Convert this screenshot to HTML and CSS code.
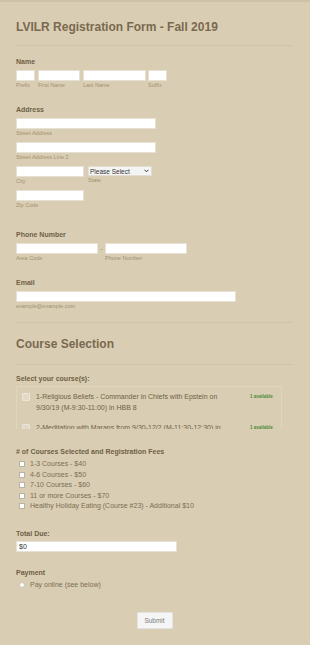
FILE: index.html
```html
<!DOCTYPE html>
<html lang="en">
  <head>
    <meta charset="UTF-8" />
    <meta name="viewport" content="width=device-width, initial-scale=1.0" />
    <title>LVILR Registration Form - Fall 2019</title>
    <link rel="stylesheet" href="styles.css">
  </head>
  <body>
    <div class="form">
      <div class="form-header">
        <h1>LVILR Registration Form - Fall 2019</h1>
      </div>

      <!-- Name -->
      <div class="field field-name">
        <div class="label">Name</div>
        <div class="row">
          <div class="part">
            <input class="input w-prefix" type="text" />
            <span class="sublabel">Prefix</span>
          </div>
          <div class="part">
            <input class="input w-first" type="text" />
            <span class="sublabel">First Name</span>
          </div>
          <div class="part">
            <input class="input w-last" type="text" />
            <span class="sublabel">Last Name</span>
          </div>
          <div class="part part-suffix">
            <input class="input w-prefix" type="text" />
            <span class="sublabel">Suffix</span>
          </div>
        </div>
      </div>

      <!-- Address -->
      <div class="field field-address">
        <div class="label">Address</div>
        <div class="part">
          <input class="input w-street" type="text" />
          <span class="sublabel">Street Address</span>
        </div>
        <div class="part part-gap">
          <input class="input w-street" type="text" />
          <span class="sublabel">Street Address Line 2</span>
        </div>
        <div class="row row-city part-gap">
          <div class="part">
            <input class="input w-city" type="text" />
            <span class="sublabel">City</span>
          </div>
          <div class="part">
            <div class="select-wrap">
              <select class="select">
                <option>Please Select</option>
              </select>
              <svg class="select-arrow" width="5" height="4" viewBox="0 0 10 8">
                <path d="M1 1.5 L5 5.5 L9 1.5" fill="none" stroke="#333" stroke-width="2" />
              </svg>
            </div>
            <span class="sublabel">State</span>
          </div>
        </div>
        <div class="part part-gap">
          <input class="input w-city" type="text" />
          <span class="sublabel">Zip Code</span>
        </div>
      </div>

      <!-- Phone -->
      <div class="field field-phone">
        <div class="label">Phone Number</div>
        <div class="row row-phone">
          <div class="part">
            <input class="input w-phone" type="text" />
            <span class="sublabel">Area Code</span>
          </div>
          <span class="dash">-</span>
          <div class="part">
            <input class="input w-phone" type="text" />
            <span class="sublabel">Phone Number</span>
          </div>
        </div>
      </div>

      <!-- Email -->
      <div class="field field-email">
        <div class="label">Email</div>
        <div class="part">
          <input class="input w-email" type="text" />
          <span class="sublabel">example@example.com</span>
        </div>
      </div>

      <div class="section-head">
        <h2>Course Selection</h2>
      </div>

      <!-- Courses -->
      <div class="field field-courses">
        <div class="label">Select your course(s):</div>
        <div class="course-box">
          <div class="course-item">
            <span class="course-check"></span>
            <span class="course-text">1-Religious Beliefs - Commander in Chiefs with Epstein on 9/30/19 (M-9:30-11:00) in HBB 8</span>
            <span class="course-stock">1 available</span>
          </div>
          <div class="course-item">
            <span class="course-check"></span>
            <span class="course-text">2-Meditation with Marans from 9/30-12/2 (M-11:30-12:30) in HBB 8</span>
            <span class="course-stock">1 available</span>
          </div>
        </div>
      </div>

      <div class="field field-fees">
        <div class="label">#&nbsp;of Courses Selected and Registration Fees</div>
        <div class="options">
          <label class="option"><span class="check"></span>1-3 Courses - $40</label>
          <label class="option"><span class="check"></span>4-6 Courses - $50</label>
          <label class="option"><span class="check"></span>7-10 Courses - $60</label>
          <label class="option"><span class="check"></span>11 or more Courses - $70</label>
          <label class="option"><span class="check"></span>Healthy Holiday Eating (Course #23) - Additional $10</label>
        </div>
      </div>

      <div class="field field-total">
        <div class="label">Total Due:</div>
        <input class="input w-total" type="text" value="$0" />
      </div>

      <div class="field field-payment">
        <div class="label">Payment</div>
        <label class="option"><span class="radio"></span>Pay online (see below)</label>
      </div>

      <div class="submit-row">
        <button class="submit" type="button">Submit</button>
      </div>
    </div>
  </body>
</html>
```

FILE: styles.css
```css
* {
  margin: 0;
  padding: 0;
  box-sizing: border-box;
}

body {
  font-family: "Liberation Sans", Arial, sans-serif;
  background-color: #d9ceb3;
  border-top: 2px solid #cdc2a6;
  color: #6f5f46;
  min-height: 100vh;
}

.form {
  width: 293px;
  padding-left: 16px;
}

.form-header {
  padding-top: 17px;
  padding-bottom: 10px;
  border-bottom: 1px solid #d0c5a9;
}

.form-header h1 {
  font-size: 12px;
  line-height: 16px;
  font-weight: 700;
  color: #7a6950;
}

.label {
  font-size: 7px;
  line-height: 9px;
  font-weight: 700;
  color: #6f5f46;
  margin-bottom: 4px;
}

.row {
  display: flex;
  gap: 3px;
}

.part {
  display: flex;
  flex-direction: column;
}

.part-suffix {
  margin-left: -1px;
}

.part-gap {
  margin-top: 5px;
}

.input {
  display: block;
  height: 11px;
  background: #ffffff;
  border: 1px solid #e6e1d4;
  font-family: "Liberation Sans", Arial, sans-serif;
  font-size: 7px;
  color: #333;
  padding: 0 2px;
  outline: none;
}

.w-prefix { width: 19px; }
.w-first { width: 42px; }
.w-last { width: 63px; }
.w-street { width: 140px; }
.w-city { width: 68px; }
.w-phone { width: 82px; }
.w-email { width: 220px; }
.w-total { width: 161px; }

.select-wrap {
  position: relative;
  width: 64px;
  height: 10px;
}

.select {
  display: block;
  width: 64px;
  height: 10px;
  font-family: "Liberation Sans", Arial, sans-serif;
  font-size: 6.5px;
  color: #333;
  background: #f4f4f4;
  border: 1px solid #e2ddd0;
  border-radius: 0;
  padding: 0 1px;
  appearance: none;
  -webkit-appearance: none;
  outline: none;
}

.select-arrow {
  position: absolute;
  right: 3px;
  top: 3px;
}

.sublabel {
  font-size: 5.5px;
  line-height: 7px;
  color: #a19171;
  margin-top: 1px;
}

.row-city {
  gap: 4px;
}

.row-phone {
  gap: 2px;
}

.dash {
  font-size: 7px;
  line-height: 11px;
  color: #a19171;
  width: 3px;
  text-align: center;
}

.field-name { margin-top: 11px; }
.field-address { margin-top: 16px; }
.field-phone { margin-top: 21px; }
.field-email { margin-top: 16px; }

.section-head {
  margin-top: 12px;
  border-top: 1px solid #d0c5a9;
  border-bottom: 1px solid #d0c5a9;
  padding: 13px 0 12px;
}

.section-head h2 {
  font-size: 12px;
  line-height: 16px;
  font-weight: 700;
  color: #7a6950;
}

/* courses */
.field-courses { margin-top: 9px; }
.field-courses .label { margin-bottom: 0; }

.course-box {
  width: 266px;
  height: 43px;
  overflow: hidden;
  border: 1px solid #e0d6bd;
  border-bottom: none;
  margin-top: 3px;
}

.course-item {
  display: flex;
  align-items: flex-start;
  padding: 5px;
}

.course-check {
  width: 8px;
  height: 8px;
  flex-shrink: 0;
  border: 1px solid #ece6d8;
  background: rgba(255, 255, 255, 0.25);
  border-radius: 1px;
  margin-top: 1px;
}

.course-text {
  font-size: 7px;
  line-height: 10.5px;
  color: #6f5f46;
  margin-left: 6px;
  width: 196px;
  flex-shrink: 0;
}

.course-stock {
  font-size: 4.5px;
  line-height: 10.5px;
  font-weight: 700;
  color: #4d8a3c;
  margin-left: 18px;
  white-space: nowrap;
}

/* fee options */
.field-fees { margin-top: 18px; }
.field-fees .label { margin-bottom: 3px; }

.options {
  display: flex;
  flex-direction: column;
}

.option {
  display: flex;
  align-items: center;
  font-size: 7px;
  line-height: 10.5px;
  color: #7d6d53;
  padding-left: 3px;
}

.check {
  width: 6px;
  height: 6px;
  background: #ffffff;
  border: 1px solid #b9b3a5;
  margin-right: 5px;
}

.radio {
  width: 6px;
  height: 6px;
  border-radius: 50%;
  background: #ffffff;
  border: 1px solid #c9c3b6;
  margin-right: 5px;
}

.field-total { margin-top: 17px; }
.field-total .label { margin-bottom: 3px; }

.field-payment { margin-top: 16px; }
.field-payment .label { margin-bottom: 3px; }

.submit-row {
  display: flex;
  justify-content: center;
  width: 277px;
  margin-top: 22px;
}

.submit {
  width: 36px;
  height: 17px;
  background: #f5f5f5;
  border: 1px solid #e3e3e3;
  font-family: "Liberation Sans", Arial, sans-serif;
  font-size: 6.5px;
  color: #7a7a7a;
  border-radius: 1px;
}
```
